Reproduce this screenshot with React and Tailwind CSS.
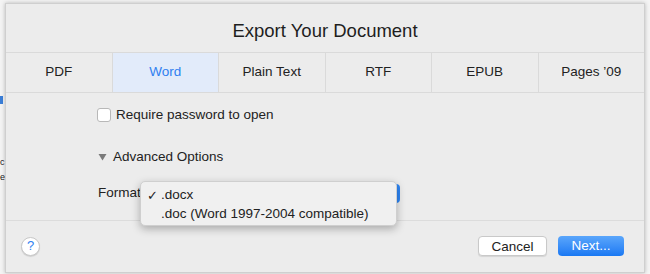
import React from 'react';

const tabs = ['PDF', 'Word', 'Plain Text', 'RTF', 'EPUB', "Pages \u201909"];

export default function App() {
  return (
    <div
      className="relative w-[650px] h-[274px] overflow-hidden bg-[#f4f4f4] text-[#222]"
      style={{ fontFamily: '"Liberation Sans", Arial, sans-serif' }}
    >
      {/* bits of the window behind */}
      <div className="absolute left-0 top-[96px] w-[3px] h-[8px] bg-[#3b7fd8]" />
      <div className="absolute left-0 top-[155px] text-[9px] leading-[15px] text-[#222]">
        <div>c</div>
        <div>e</div>
      </div>

      {/* dialog */}
      <div className="absolute left-[5px] top-[3px] w-[640px] h-[270px] flex flex-col bg-[#ececec] border border-[#cfcfcf] shadow-[0_0_4px_rgba(0,0,0,0.25)]">
        <div className="h-[48px] flex items-center justify-center text-[18.5px] text-[#1e1e1e] pt-[6px]">
          Export Your Document
        </div>

        <div className="h-[41px] flex border-y border-[#dadada]">
          {tabs.map((t, i) => (
            <div
              key={t}
              className={
                'flex-1 flex items-center justify-center text-[13.5px] ' +
                (i > 0 ? 'border-l border-[#dadada] ' : '') +
                (t === 'Word' ? 'bg-[#e2ebfa] text-[#2f7ff0]' : 'text-[#222]')
              }
            >
              {t}
            </div>
          ))}
        </div>

        <div className="relative h-[128px] flex flex-col pl-[78px] border-b border-[#dcdcdc]">
          <div className="mt-[13px] flex items-center gap-[5px] h-[18px] ml-[13px]">
            <div className="w-[14px] h-[14px] rounded-[3px] bg-white border border-[#b8b8b8]" />
            <span className="text-[13.5px]">Require password to open</span>
          </div>

          <div className="mt-[24px] flex items-center gap-[6px] h-[18px] ml-[14px]">
            <svg width="9" height="8" viewBox="0 0 9 8">
              <path d="M0.5 1 L8.5 1 L4.5 7.5 Z" fill="#7a7a7a" />
            </svg>
            <span className="text-[13.5px]">Advanced Options</span>
          </div>

          <div className="mt-[17px] ml-[14px] flex items-center h-[20px]">
            <span className="text-[13.5px]">Format:</span>
            <div className="ml-[4px] w-[251px] h-[19px] rounded-[4px] bg-[#2e86f5]" />
          </div>

          {/* open popup menu */}
          <div className="absolute left-[134px] top-[88px] w-[257px] h-[45px] rounded-[5px] bg-[#f0f0f0] border border-[#cfcfcf] shadow-[0_3px_8px_rgba(0,0,0,0.28)] flex flex-col pt-[4px]">
            <div className="h-[19px] flex items-center text-[13.5px]">
              <span className="w-[20px] pl-[6px] text-[13px]">{'\u2713'}</span>
              <span>.docx</span>
            </div>
            <div className="h-[19px] flex items-center text-[13.5px] pl-[20px]">
              .doc (Word 1997-2004 compatible)
            </div>
          </div>
        </div>

        <div className="h-[50px] flex items-center pl-[15px] pr-[20px]">
          <div className="w-[19px] h-[19px] rounded-full bg-white border border-[#c8c8c8] flex items-center justify-center text-[13px] text-[#2f7ff0] shadow-[0_1px_1px_rgba(0,0,0,0.12)]">
            ?
          </div>
          <div className="flex-1" />
          <button className="w-[69px] h-[20px] rounded-[4px] bg-white border border-[#c9c9c9] text-[13.5px] text-[#222] shadow-[0_1px_1px_rgba(0,0,0,0.1)]">
            Cancel
          </button>
          <button className="ml-[11px] w-[66px] h-[20px] rounded-[4px] bg-gradient-to-b from-[#5aa6fb] to-[#1878f3] text-[13.5px] text-white">
            Next...
          </button>
        </div>
      </div>
    </div>
  );
}
